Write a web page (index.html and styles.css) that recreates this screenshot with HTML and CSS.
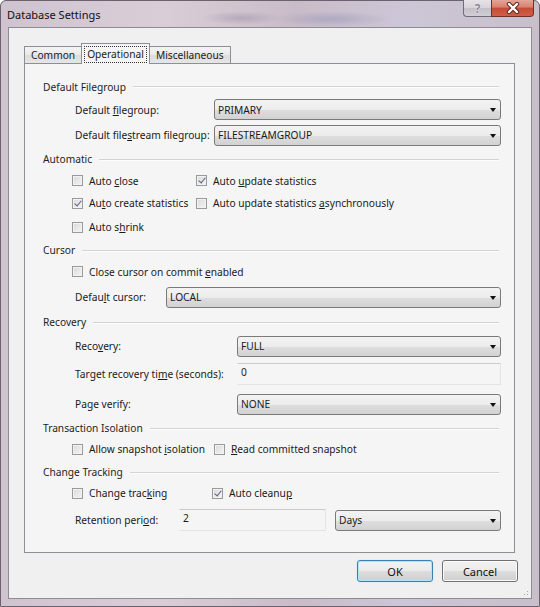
FILE: index.html
```html
<!DOCTYPE html>
<html>
<head>
  <title>Database Settings</title>
  <link rel="stylesheet" href="styles.css">
</head>
<body>
  <div class="window">
    <div class="titlebar">
      <span class="title">Database Settings</span>
      <div class="caption-buttons">
        <span class="cap-btn help">?</span>
        <span class="cap-btn close">
          <svg width="14" height="12" viewBox="0 0 14 12">
            <path d="M3 2 L11 10 M11 2 L3 10" stroke="#5a2a22" stroke-width="4.4" stroke-linecap="round"/>
            <path d="M3 2 L11 10 M11 2 L3 10" stroke="#fff" stroke-width="2.4" stroke-linecap="round"/>
          </svg>
        </span>
      </div>
    </div>

    <div class="client">
      <div class="tabs">
        <span class="tab">Common</span>
        <span class="tab active"><span class="focus">Operational</span></span>
        <span class="tab">Miscellaneous</span>
      </div>

      <div class="panel">
        <div class="group h-fg"><span>Default Filegroup</span></div>
        <div class="row r-fg1">
          <span class="lbl">Default <u>f</u>ilegroup:</span>
          <div class="combo w-fg">PRIMARY</div>
        </div>
        <div class="row r-fg2">
          <span class="lbl">Default file<u>s</u>tream filegroup:</span>
          <div class="combo w-fg">FILESTREAMGROUP</div>
        </div>

        <div class="group h-auto"><span>Automatic</span></div>
        <div class="row checks r-auto1">
          <label class="check col-auto"><span class="box"></span><span>Auto <u>c</u>lose</span></label>
          <label class="check"><span class="box checked"></span><span>Auto <u>u</u>pdate statistics</span></label>
        </div>
        <div class="row checks r-auto2">
          <label class="check col-auto"><span class="box checked"></span><span>Au<u>t</u>o create statistics</span></label>
          <label class="check"><span class="box"></span><span>Auto update statistics <u>a</u>synchronously</span></label>
        </div>
        <div class="row checks r-auto3">
          <label class="check"><span class="box"></span><span>Auto s<u>h</u>rink</span></label>
        </div>

        <div class="group h-cur"><span>Cursor</span></div>
        <div class="row checks r-cur1">
          <label class="check"><span class="box"></span><span>Close cursor on commit <u>e</u>nabled</span></label>
        </div>
        <div class="row r-cur2">
          <span class="lbl">Defau<u>l</u>t cursor:</span>
          <div class="combo w-cur">LOCAL</div>
        </div>

        <div class="group h-rec"><span>Recovery</span></div>
        <div class="row r-rec1">
          <span class="lbl">Reco<u>v</u>ery:</span>
          <div class="combo w-rec">FULL</div>
        </div>
        <div class="row r-rec2">
          <span class="lbl">Target recovery ti<u>m</u>e (seconds):</span>
          <div class="textbox w-rec">0</div>
        </div>
        <div class="row r-rec3">
          <span class="lbl">Page verify:</span>
          <div class="combo w-rec">NONE</div>
        </div>

        <div class="group h-tx"><span>Transaction Isolation</span></div>
        <div class="row checks r-tx1">
          <label class="check col-tx"><span class="box"></span><span>Allow snapshot <u>i</u>solation</span></label>
          <label class="check"><span class="box"></span><span><u>R</u>ead committed snapshot</span></label>
        </div>

        <div class="group h-ct"><span>Change Tracking</span></div>
        <div class="row checks r-ct1">
          <label class="check col-ct"><span class="box"></span><span>Change trac<u>k</u>ing</span></label>
          <label class="check"><span class="box checked"></span><span>Auto cleanu<u>p</u></span></label>
        </div>
        <div class="row r-ct2">
          <span class="lbl">Retention peri<u>o</u>d:</span>
          <div class="textbox w-ret">2</div>
          <div class="combo w-days">Days</div>
        </div>
      </div>

      <div class="buttons">
        <button class="btn default">OK</button>
        <button class="btn">Cancel</button>
      </div>
      <span class="grip"></span>
    </div>
  </div>
</body>
</html>
```

FILE: styles.css
```css
body {
  margin: 0;
  font-family: "Noto Sans", "Open Sans", sans-serif;
  font-size: 10.2px;
  color: #1a1a1a;
}

u {
  text-decoration-thickness: 1px;
  text-underline-offset: 1px;
}

/* glass frame round the dialog */
.window {
  width: 540px;
  height: 607px;
  box-sizing: border-box;
  padding: 0 7px 8px 7px;
  position: relative;
  background:
    radial-gradient(ellipse 60px 8px at 330px 18px, rgba(120, 130, 170, 0.35), transparent),
    radial-gradient(ellipse 40px 7px at 240px 17px, rgba(120, 110, 140, 0.3), transparent),
    linear-gradient(to right, #cfc3cf 0%, #d9ced8 30%, #c9bcc8 55%, #cdc6d6 75%, #c8bfcb 100%);
  border: 1px solid #6a636d;
  border-radius: 6px 6px 0 0;
}

.titlebar {
  height: 26px;
  display: flex;
  align-items: center;
}

.title {
  font-size: 11px;
  color: #111;
  margin-left: -1px;
}

.caption-buttons {
  position: absolute;
  top: -1px;
  right: 5px;
  display: flex;
}

.cap-btn {
  height: 17px;
  display: flex;
  align-items: center;
  justify-content: center;
  box-sizing: border-box;
}

.help {
  width: 28px;
  border: 1px solid #6e6c78;
  border-top: none;
  border-right: none;
  border-radius: 0 0 0 4px;
  background: linear-gradient(#e6e3e8, #d7d3da 50%, #c4c0c9 51%, #d2ced6);
  color: #8a8791;
  font-weight: bold;
  font-size: 12px;
  text-shadow: 0 0 1px #fff, 0 0 1px #fff;
}

.close {
  width: 43px;
  border: 1px solid #6b3429;
  border-top: none;
  border-radius: 0 0 4px 0;
  background: linear-gradient(#e3a597, #d8806f 45%, #c64a36 50%, #d35f49);
}

/* dialog client area */
.client {
  height: 572px;
  box-sizing: border-box;
  border: 1px solid #8f8b93;
  background: #f0f0f0;
  padding: 15px 0 0 15px;
  position: relative;
}

.tabs {
  display: flex;
  align-items: flex-end;
  height: 20px;
  position: relative;
  z-index: 1;
}

.tab {
  height: 17px;
  box-sizing: border-box;
  padding: 0 6px;
  display: flex;
  align-items: center;
  border: 1px solid #8e8f94;
  border-bottom: none;
  background: linear-gradient(#f4f4f4, #e9e9e9 50%, #dcdcdc 51%, #e6e6e6);
  margin-right: -1px;
}

.tab.active {
  height: 21px;
  margin-bottom: -1px;
  background: #f5f5f5;
  padding: 0 2px;
  z-index: 2;
}

.focus {
  border: 1px dotted #333;
  padding: 1px 2px 2px;
  line-height: 12px;
}

.panel {
  width: 491px;
  height: 490px;
  box-sizing: border-box;
  border: 1px solid #8e8f94;
  background: #f5f5f5;
  padding: 12px 13px 0 18px;
}

.group {
  display: flex;
  align-items: center;
  color: #1e1e1e;
}

.group::after {
  content: "";
  flex: 1;
  height: 0;
  border-top: 1px solid #d3d3d3;
  border-bottom: 1px solid #fdfdfd;
  margin: 1px 2px 0 7px;
}

.row {
  display: flex;
  align-items: center;
  padding-left: 32px;
}

.row.checks {
  padding-left: 29px;
}

.h-fg { height: 21px; }
.r-fg1 { height: 25px; }
.r-fg2 { height: 26px; }
.h-auto { height: 22px; }
.r-auto1 { height: 21px; }
.r-auto2 { height: 24px; }
.r-auto3 { height: 24px; }
.h-cur { height: 22px; }
.r-cur1 { height: 21px; }
.r-cur2 { height: 30px; }
.h-rec { height: 20px; }
.r-rec1 { height: 28px; }
.r-rec2 { height: 28px; }
.r-rec3 { height: 32px; }
.h-tx { height: 16px; }
.r-tx1 { height: 26px; }
.h-ct { height: 20px; }
.r-ct1 { height: 22px; }
.r-ct2 { height: 32px; }

.check {
  display: flex;
  align-items: center;
  white-space: nowrap;
}

.col-auto { width: 124px; }
.col-tx { width: 142px; }
.col-ct { width: 140px; }

.box {
  width: 11px;
  height: 11px;
  flex: none;
  box-sizing: border-box;
  border: 1px solid #9a9a9a;
  background: linear-gradient(135deg, #dadada, #f4f4f4);
  box-shadow: inset 0 0 0 1px #f2f2f2;
  margin-right: 6px;
  position: relative;
}

.box.checked::after {
  content: "";
  position: absolute;
  left: 3px;
  top: 0;
  width: 3px;
  height: 6px;
  border: solid #55608a;
  border-width: 0 1.5px 1.5px 0;
  transform: rotate(40deg);
}

.combo {
  margin-left: auto;
  height: 21px;
  box-sizing: border-box;
  border: 1px solid #7a7a7a;
  border-radius: 3px;
  background: linear-gradient(#f3f3f3, #ececec 50%, #dedede 51%, #d2d2d2);
  display: flex;
  align-items: center;
  padding-left: 3px;
  position: relative;
}

.combo::after {
  content: "";
  position: absolute;
  right: 4px;
  top: 8px;
  border-left: 3.5px solid transparent;
  border-right: 3.5px solid transparent;
  border-top: 4px solid #111;
}

.textbox {
  margin-left: auto;
  height: 22px;
  box-sizing: border-box;
  border: 1px solid #e4e4e4;
  border-top-color: #cbcbcb;
  border-left-color: transparent;
  padding: 0 0 4px 3px;
  display: flex;
  align-items: center;
}

.w-fg { width: 287px; }
.w-cur { width: 335px; }
.w-rec { width: 264px; }
.w-ret { width: 147px; }
.w-days { width: 166px; margin-left: 9px; }

.buttons {
  display: flex;
  justify-content: flex-end;
  gap: 9px;
  margin-top: 7px;
  padding-right: 13px;
}

.btn {
  width: 76px;
  height: 22px;
  font-family: inherit;
  font-size: 11px;
  color: #111;
  border: 1px solid #707070;
  border-radius: 3px;
  background: linear-gradient(#f2f2f2, #ebebeb 50%, #dddddd 51%, #cfcfcf);
  box-shadow: inset 0 0 0 1px #fbfbfb;
  padding: 0;
}

.btn.default {
  border-color: #3c7fb1;
  box-shadow: inset 0 0 0 1px #b4e2f7, 0 0 2px #bfe6f8;
}

/* resize grip in the corner */
.grip {
  position: absolute;
  right: 1px;
  bottom: 1px;
  width: 10px;
  height: 10px;
  background:
    radial-gradient(circle, #a5a5a5 0.8px, transparent 1px) 0 0 / 3px 3px;
  clip-path: polygon(100% 0, 100% 100%, 0 100%);
}
```
